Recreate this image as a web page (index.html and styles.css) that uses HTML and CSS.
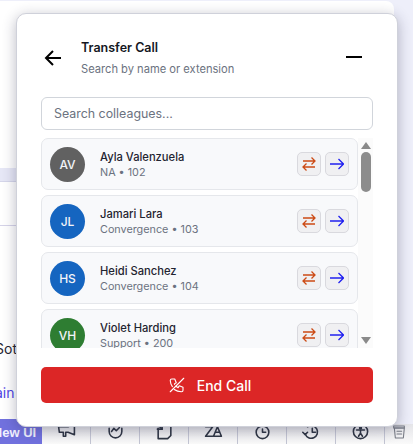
FILE: index.html
```html
<!DOCTYPE html>
<html lang="en">
<head>
    <meta charset="UTF-8">
    <meta name="viewport" content="width=device-width, initial-scale=1.0">
    <title>Transfer Call</title>
    <link rel="stylesheet" href="styles.css">
</head>
<body>
    <div class="page">
        <main class="page-main">
            <div class="band"></div>
            <div class="rule"></div>
            <p class="line-text">Sot</p>
            <a class="line-link" href="#">ain</a>
        </main>

        <nav class="toolbar">
            <button class="new-ui">New UI</button>
            <div class="tool">
                <svg viewBox="0 0 24 24"><path d="M2 6h12l8-3v13l-8-3H11v5H8v-5H3z"/></svg>
            </div>
            <div class="tool">
                <svg viewBox="0 0 24 24"><path d="M4 8v4a8 8 0 0 0 16 0V8"/><path d="M7 12l3-4 3 3 4-4"/></svg>
            </div>
            <div class="tool">
                <svg viewBox="0 0 24 24"><path d="M9 3h11v14l-4 4H4V8"/><path d="M3 3l6 6"/><path d="M9 3v6H3"/></svg>
            </div>
            <div class="tool">
                <svg viewBox="0 0 24 24"><path d="M2 6h9L2 18h9"/><path d="M12 18l5-12 5 12zM15 13h5"/></svg>
            </div>
            <div class="tool">
                <svg viewBox="0 0 24 24"><circle cx="12" cy="13" r="8"/><path d="M12 9v4h4M3 5l3-2M21 5l-3-2"/></svg>
            </div>
            <div class="tool">
                <svg viewBox="0 0 24 24"><path d="M4 15a8 8 0 1 0 3-9"/><path d="M1 13l3 3 3-3"/><path d="M13 8v5h4"/></svg>
            </div>
            <div class="tool">
                <svg viewBox="0 0 24 24"><circle cx="12" cy="12" r="9"/><circle cx="12" cy="7.5" r="1.2"/><path d="M7 10h10M12 10v4M12 14l-2.5 4M12 14l2.5 4"/></svg>
            </div>
            <div class="tool tool-last">
                <svg viewBox="0 0 24 24"><path d="M5 6h15l-1.500 15H6.500z"/><path d="M4 3h16v3H4zM9 11h7M9 15h7"/></svg>
            </div>
        </nav>
    </div>

    <section class="panel">
        <header class="panel-head">
            <svg class="back-icon" viewBox="0 0 16 16"><path d="M16 8H1M8 1L1 8l7 7"/></svg>
            <div class="panel-title">
                <h1>Transfer Call</h1>
                <p>Search by name or extension</p>
            </div>
            <span class="minimize"></span>
        </header>

        <input class="search" type="text" placeholder="Search colleagues...">

        <div class="list-wrap">
            <ul class="list">
                <li class="row">
                    <span class="avatar avatar-gray">AV</span>
                    <div class="info">
                        <strong>Ayla Valenzuela</strong>
                        <span>NA • 102</span>
                    </div>
                    <button class="act">
                        <svg class="swap" viewBox="0 0 14 14"><path d="M1 4h12M9.500 .5L13 4 9.500 7.500M13 10H1M4.500 6.500L1 10l3.500 3.500"/></svg>
                    </button>
                    <button class="act">
                        <svg class="go" viewBox="0 0 14 14"><path d="M0 7h13M8.500 2L13.500 7 8.500 12"/></svg>
                    </button>
                </li>
                <li class="row">
                    <span class="avatar avatar-blue">JL</span>
                    <div class="info">
                        <strong>Jamari Lara</strong>
                        <span>Convergence • 103</span>
                    </div>
                    <button class="act">
                        <svg class="swap" viewBox="0 0 14 14"><path d="M1 4h12M9.500 .5L13 4 9.500 7.500M13 10H1M4.500 6.500L1 10l3.500 3.500"/></svg>
                    </button>
                    <button class="act">
                        <svg class="go" viewBox="0 0 14 14"><path d="M0 7h13M8.500 2L13.500 7 8.500 12"/></svg>
                    </button>
                </li>
                <li class="row">
                    <span class="avatar avatar-blue">HS</span>
                    <div class="info">
                        <strong>Heidi Sanchez</strong>
                        <span>Convergence • 104</span>
                    </div>
                    <button class="act">
                        <svg class="swap" viewBox="0 0 14 14"><path d="M1 4h12M9.500 .5L13 4 9.500 7.500M13 10H1M4.500 6.500L1 10l3.500 3.500"/></svg>
                    </button>
                    <button class="act">
                        <svg class="go" viewBox="0 0 14 14"><path d="M0 7h13M8.500 2L13.500 7 8.500 12"/></svg>
                    </button>
                </li>
                <li class="row">
                    <span class="avatar avatar-green">VH</span>
                    <div class="info">
                        <strong>Violet Harding</strong>
                        <span>Support • 200</span>
                    </div>
                    <button class="act">
                        <svg class="swap" viewBox="0 0 14 14"><path d="M1 4h12M9.500 .5L13 4 9.500 7.500M13 10H1M4.500 6.500L1 10l3.500 3.500"/></svg>
                    </button>
                    <button class="act">
                        <svg class="go" viewBox="0 0 14 14"><path d="M0 7h13M8.500 2L13.500 7 8.500 12"/></svg>
                    </button>
                </li>
            </ul>
            <div class="scrollbar">
                <span class="arrow-up"></span>
                <span class="thumb"></span>
                <span class="arrow-down"></span>
            </div>
        </div>

        <button class="end-call">
            <svg viewBox="0 0 24 24"><path d="M3 21L21 3"/><path d="M5.831 14.161a15.946 15.946 0 0 1-2.831-8.161a2 2 0 0 1 2-2h4l2 5l-2.500 1.500c.108 .22 .223 .435 .345 .645m1.751 2.277c.843 .84 1.822 1.544 2.904 2.078l1.500-2.500l5 2v4a2 2 0 0 1-2 2a16 16 0 0 1-9.667-3.024"/></svg>
            End Call
        </button>
    </section>
</body>
</html>
```

FILE: styles.css
```css
* {
    margin: 0;
    padding: 0;
    box-sizing: border-box;
}

body {
    font-family: Inter, 'Noto Sans', sans-serif;
    background-color: #eeeffa;
    color: #1f2430;
    height: 444px;
    overflow: hidden;
}

/* page behind the dialog */
.page {
    height: 444px;
    padding-top: 1px;
    display: flex;
    flex-direction: column;
}

.page-main {
    width: 394px;
    height: 423px;
    background: white;
    border-radius: 0 8px 0 0;
    padding-top: 167px;
}

.band {
    height: 14px;
    background: #e6e7f6;
    border-bottom: 1px solid #d5d6ea;
}

.rule {
    height: 1px;
    margin-top: 43px;
    background: #d5d3e8;
}

.line-text {
    margin: 113px 0 0 -5px;
    font-size: 14px;
    line-height: 20px;
    color: #1f2430;
}

.line-link {
    display: block;
    margin: 24px 0 0 -5px;
    font-size: 14px;
    line-height: 20px;
    color: #4f46e5;
    text-decoration: none;
}

.toolbar {
    flex: 1;
    display: flex;
    background: linear-gradient(#e4e4e8, #fafafa);
}

.new-ui {
    flex: none;
    width: 50px;
    height: 25px;
    margin: -5px 0 0 -8px;
    padding: 1px 5px 0 0;
    border: none;
    background: #7171de;
    color: #f1f1ff;
    font-family: 'Liberation Sans', sans-serif;
    font-size: 13px;
    font-weight: 700;
    white-space: nowrap;
}

.tool {
    width: 49px;
    flex: none;
    display: flex;
    justify-content: center;
    border-right: 1px solid #c3c5d3;
}

.tool-last {
    border-right: none;
    width: 28px;
}

.tool svg {
    width: 19px;
    height: 19px;
    margin-top: -2px;
    fill: none;
    stroke: #2f3644;
    stroke-width: 2;
    stroke-linecap: round;
    stroke-linejoin: round;
}

.tool-last svg {
    width: 16px;
    height: 16px;
    margin-top: 0;
    stroke: #777b85;
    stroke-width: 1.6;
}

/* dialog */
.panel {
    position: absolute;
    left: 16px;
    top: 13px;
    width: 382px;
    height: 414px;
    background: white;
    border: 1px solid #cfd1da;
    border-radius: 10px;
    box-shadow: 0 3px 14px rgba(40, 40, 70, 0.32);
    padding: 0 24px;
    display: flex;
    flex-direction: column;
}

.panel-head {
    height: 83px;
    display: flex;
    align-items: center;
    padding: 5px 11px 0 4px;
}

.back-icon {
    width: 16px;
    height: 16px;
    flex: none;
    margin-right: 20px;
    overflow: visible;
    fill: none;
    stroke: black;
    stroke-width: 2;
}

.panel-title {
    flex: 1;
}

.panel-title h1 {
    font-size: 12.500px;
    font-weight: 600;
    line-height: 16px;
    color: #15181f;
}

.panel-title p {
    font-size: 11.150px;
    line-height: 14px;
    color: #6b7280;
    margin-top: 6px;
}

.minimize {
    width: 16px;
    height: 2px;
    background: black;
    margin-top: -3px;
}

.search {
    width: 100%;
    height: 33px;
    flex: none;
    border: 1px solid #d1d5db;
    border-radius: 6px;
    padding: 0 12px;
    font-family: inherit;
    font-size: 12.400px;
    outline: none;
}

.search::placeholder {
    color: #6b7280;
    opacity: 1;
}

.list-wrap {
    margin-top: 8px;
    height: 210px;
    flex: none;
    display: flex;
    justify-content: space-between;
}

.list {
    width: 317px;
    height: 210px;
    overflow: hidden;
    list-style: none;
    display: flex;
    flex-direction: column;
    gap: 5px;
}

.row {
    height: 52px;
    flex: none;
    display: flex;
    align-items: center;
    gap: 4px;
    padding: 0 8px;
    background: #f8f9fb;
    border: 1px solid #e5e7eb;
    border-radius: 7px;
}

.avatar {
    width: 35px;
    height: 35px;
    flex: none;
    border-radius: 50%;
    color: #f2f4f8;
    font-size: 12px;
    font-weight: 500;
    display: flex;
    align-items: center;
    justify-content: center;
}

.avatar-gray { background: #616161; }
.avatar-blue { background: #1565c0; }
.avatar-green { background: #2e7d32; }

.info {
    flex: 1;
    margin: 2px 0 0 11px;
    display: flex;
    flex-direction: column;
    gap: 2px;
}

.info strong {
    font-size: 11.200px;
    font-weight: 500;
    line-height: 14px;
    color: #1f2430;
}

.info span {
    font-size: 10.800px;
    line-height: 14px;
    color: #6b7280;
}

.act {
    width: 24px;
    height: 24px;
    flex: none;
    background: #f0f0f2;
    border: 1px solid #d9d9de;
    border-radius: 5px;
    display: flex;
    align-items: center;
    justify-content: center;
}

.act svg {
    width: 14px;
    height: 14px;
    fill: none;
    stroke-width: 1.300;
}

.swap { stroke: #cc4a14; }
.go { stroke: #2020f0; }

.scrollbar {
    width: 15px;
    background: #fbfbfb;
    display: flex;
    flex-direction: column;
    align-items: center;
    padding: 4px 0;
}

.arrow-up,
.arrow-down {
    width: 0;
    height: 0;
    border-left: 5px solid transparent;
    border-right: 5px solid transparent;
}

.arrow-up { border-bottom: 7px solid #8a8a8a; }
.arrow-down { border-top: 7px solid #8a8a8a; margin-top: auto; }

.thumb {
    width: 10px;
    height: 40px;
    margin-top: 3px;
    border-radius: 5px;
    background: #8c8c8c;
}

.end-call {
    margin-top: 19px;
    height: 36px;
    flex: none;
    background: #dc2626;
    color: white;
    border: none;
    border-radius: 5px;
    font-family: inherit;
    font-size: 14px;
    font-weight: 500;
    display: flex;
    align-items: center;
    justify-content: center;
    gap: 11px;
    padding-left: 5px;
}

.end-call svg {
    width: 18px;
    height: 18px;
    fill: none;
    stroke: white;
    stroke-width: 1.500;
    stroke-linecap: round;
    stroke-linejoin: round;
}
```
